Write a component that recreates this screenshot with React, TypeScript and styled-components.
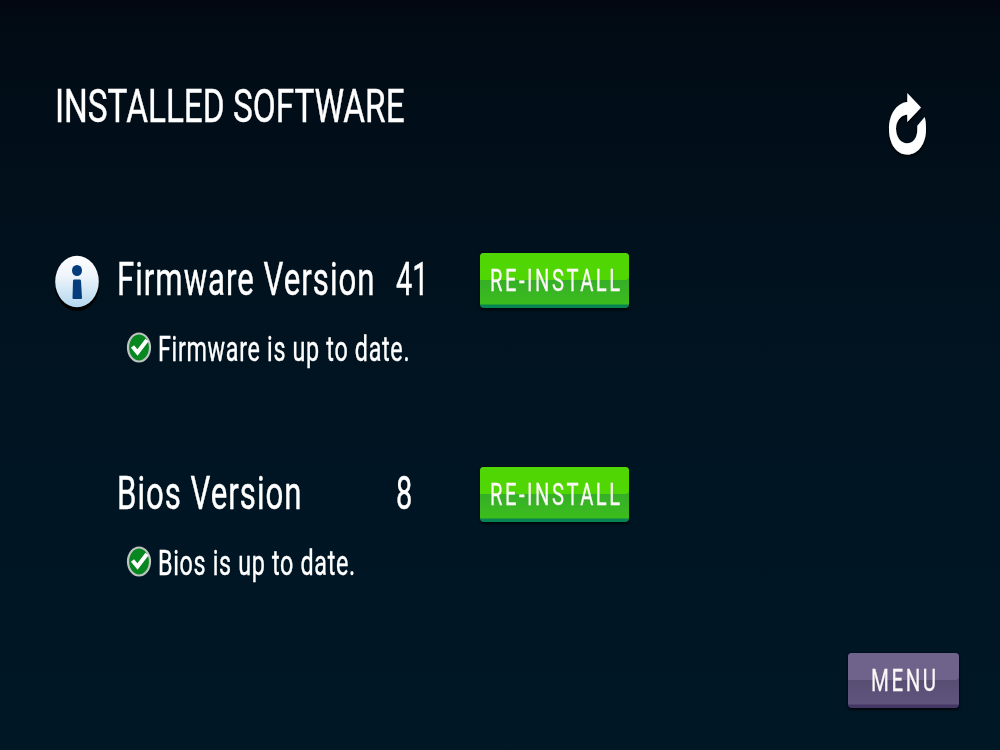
import { styled, createGlobalStyle } from 'styled-components';

const GlobalStyle = createGlobalStyle`
  * {
    box-sizing: border-box;
  }

  body {
    margin: 0;
    background: #001524;
  }
`;

const TONE = {
  green: {
    width: 149,
    indent: 10,
    gloss: '#50d703',
    body: 'linear-gradient(#35ae29 26px, #3cbd1d 51px, #078453 52px)',
  },
  purple: {
    width: 111,
    indent: 23,
    gloss: '#6f638b',
    body: 'linear-gradient(#574c72 26px, #60557d 51px, #443766 52px)',
  },
};

const S = {
  Screen: styled.main`
    display: flex;
    flex-direction: column;
    width: 1000px;
    height: 750px;
    padding: 82px 41px 42px 55px;
    overflow: hidden;
    background: linear-gradient(#030712 0, #010b14 28px, #010e19 130px, #01121e 260px, #001523 480px, #001725 750px);
    color: #fff;
    font-family: Roboto, 'Liberation Sans', sans-serif;
  `,

  Header: styled.header`
    display: flex;
    flex-shrink: 0;
    justify-content: space-between;
    height: 171px;
    padding-right: 30px;
  `,

  // condensed lettering: full-width glyphs squeezed horizontally
  Text: styled.span<{ $size: number; $stretch: number; $spacing?: number; $stroke?: number }>`
    position: relative;
    display: block;
    margin: 0;
    font-size: ${({ $size }) => $size}px;
    font-weight: 400;
    line-height: 1;
    letter-spacing: ${({ $spacing = 0 }) => $spacing}px;
    white-space: pre;
    -webkit-text-stroke: ${({ $stroke = 0.45 }) => $stroke}px currentColor;
    transform: scaleX(${({ $stretch }) => $stretch});
    transform-origin: left top;
  `,

  IconButton: styled.button`
    width: 43px;
    height: 74px;
    margin-top: 7px;
    padding: 0;
    border: 0;
    background: none;
  `,

  List: styled.div`
    display: flex;
    flex-direction: column;
    flex-shrink: 0;
    gap: 103px;
  `,

  Entry: styled.section`
    height: 111px;
  `,

  VersionRow: styled.div`
    display: grid;
    grid-template-columns: 62px 279px 83.5px 150px;
    height: 79px;
  `,

  Cell: styled.div`
    width: 0;
    padding-top: 3px;
  `,

  StatusRow: styled.div`
    display: flex;
    gap: 6px;
    padding-left: 71px;
  `,

  StatusText: styled.div`
    width: 0;
  `,

  Button: styled.button<{ $tone: keyof typeof TONE }>`
    position: relative;
    display: block;
    width: ${({ $tone }) => TONE[$tone].width}px;
    height: 55px;
    padding: 0 0 2px ${({ $tone }) => TONE[$tone].indent}px;
    border: 0;
    border-radius: 4px;
    color: #fbf7f7;
    font-family: inherit;
    text-align: left;
    background: ${({ $tone }) => TONE[$tone].body};
    box-shadow: 0 2px 3px #000a, 0 0 2px #0008;

    &::before {
      content: '';
      position: absolute;
      inset: 0 0 auto;
      height: 26.5px;
      border-radius: 4px 4px 4px 0;
      background: ${({ $tone }) => TONE[$tone].gloss};
    }
  `,

  Footer: styled.footer`
    display: flex;
    justify-content: flex-end;
    margin-top: auto;
  `,
};

function RefreshIcon() {
  return (
    <svg width="43" height="74" viewBox="0 0 43 74">
      <defs>
        <filter id="refreshShadow" x="-20%" y="-20%" width="140%" height="140%">
          <feDropShadow dx="0" dy="2" stdDeviation="1.5" floodColor="#000" />
        </filter>
      </defs>
      <path
        d="M21.300 4 L35 18.500 L21.300 33 V25.500 C14.500 26 10 32 10 39.500 C10 47.500 14.500 54.300 21 54.300 C27.500 54.300 31.500 48 31.300 40.500 V36.700 L38.700 28 C39.700 32 40 35 40 40 C40 55 32 65.500 21.300 65.500 C10.500 65.500 3 54.500 3 40 C3 26 10 14 21.300 13 Z"
        fill="#fff"
        filter="url(#refreshShadow)"
      />
    </svg>
  );
}

function InfoIcon() {
  return (
    <svg width="50" height="62" viewBox="0 0 50 62">
      <defs>
        <linearGradient id="infoFill" x2="0" y2="1">
          <stop offset="0" stopColor="#fff" />
          <stop offset=".4" stopColor="#edf4fb" />
          <stop offset="1" stopColor="#b3d7ef" />
        </linearGradient>
      </defs>
      <ellipse cx="22" cy="31" rx="22.500" ry="27" fill="#000" />
      <ellipse cx="22" cy="28.500" rx="21.800" ry="25.700" fill="url(#infoFill)" />
      <ellipse cx="22" cy="17.500" rx="5" ry="5.500" fill="#043c7c" />
      <path d="M19 26.500 H25 Q26 26.500 26 28 L27 45 Q27 46 26 46 H18.500 Q17.500 46 17.500 45 L18 28 Q18 26.500 19 26.500 Z" fill="#043c7c" />
    </svg>
  );
}

function CheckIcon() {
  return (
    <svg width="26" height="32" viewBox="0 0 26 32">
      <ellipse cx="13" cy="15.500" rx="11" ry="14" fill="#078720" stroke="#bfc4c2" strokeWidth="2.200" />
      <path d="M6.500 14.500 L11.500 20.500 L21 8" fill="none" stroke="#fff" strokeWidth="4" />
    </svg>
  );
}

interface EntryProps {
  name: string;
  version: string;
  status: string;
  hasInfo?: boolean;
}

function SoftwareEntry({ name, version, status, hasInfo }: EntryProps) {
  return (
    <S.Entry>
      <S.VersionRow>
        <div>{hasInfo && <InfoIcon />}</div>
        <S.Cell>
          <S.Text $size={46.5} $stretch={0.67} $spacing={1.5}>{name}</S.Text>
        </S.Cell>
        <S.Cell>
          <S.Text $size={46} $stretch={0.63}>{version}</S.Text>
        </S.Cell>
        <S.Button $tone="green">
          <S.Text $size={32} $stretch={0.63} $spacing={4} $stroke={0.3}>RE-INSTALL</S.Text>
        </S.Button>
      </S.VersionRow>
      <S.StatusRow>
        <CheckIcon />
        <S.StatusText>
          <S.Text $size={34.5} $stretch={0.676} $spacing={1} $stroke={0.4}>{status}</S.Text>
        </S.StatusText>
      </S.StatusRow>
    </S.Entry>
  );
}

function App() {
  return (
    <>
      <GlobalStyle />
      <S.Screen>
        <S.Header>
          <S.Text as="h1" $size={47} $stretch={0.709}>INSTALLED SOFTWARE</S.Text>
          <S.IconButton aria-label="Refresh">
            <RefreshIcon />
          </S.IconButton>
        </S.Header>
        <S.List>
          <SoftwareEntry name="Firmware Version" version="41" status="Firmware is up to date." hasInfo />
          <SoftwareEntry name="Bios Version" version="8" status="Bios is up to date." />
        </S.List>
        <S.Footer>
          <S.Button $tone="purple">
            <S.Text $size={32} $stretch={0.64} $spacing={4} $stroke={0.3}>MENU</S.Text>
          </S.Button>
        </S.Footer>
      </S.Screen>
    </>
  );
}

export default App;
